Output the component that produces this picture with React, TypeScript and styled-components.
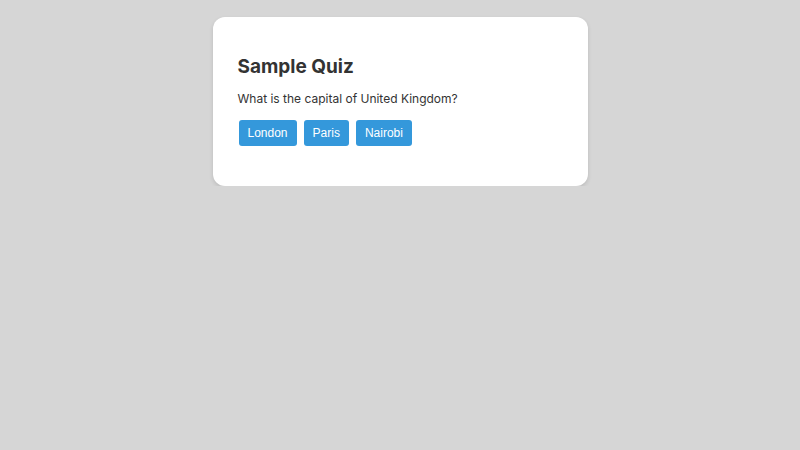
import React, { useState } from 'react';
import styled, { createGlobalStyle } from 'styled-components';

const GlobalStyle = createGlobalStyle`
	body {
		margin: 0;
		background: #d6d6d6;
		font-family: Inter, "Liberation Sans", sans-serif;
		color: #333;
	}
`;

const Page = styled.div`
	display: flex;
	justify-content: center;
	padding-top: 17px;
`;

const Card = styled.div`
	width: 375px;
	box-sizing: border-box;
	background: #fff;
	border-radius: 12px;
	box-shadow: 0 2px 4px rgba(0, 0, 0, 0.12);
	padding: 38px 25px 40px;
`;

const Title = styled.h2`
	font-size: 19px;
	font-weight: 700;
	line-height: 24px;
	margin: 0 0 11px;
	color: #333;
`;

const Question = styled.p`
	font-size: 12px;
	line-height: 18px;
	margin: 0 0 12px;
	color: #333;
`;

const Answers = styled.div`
	display: flex;
	gap: 7px;
	padding-left: 1px;
`;

const Answer = styled.button<{ picked: boolean }>`
	font-family: "Liberation Sans", Arial, sans-serif;
	font-size: 12px;
	line-height: 16px;
	padding: 5px 9px;
	border: none;
	border-radius: 3px;
	background: ${({ picked }) => (picked ? '#2a7fba' : '#3498db')};
	color: #fff;
	cursor: pointer;
`;

const options = ['London', 'Paris', 'Nairobi'];

function App(): JSX.Element {
	const [picked, setPicked] = useState<string | null>(null);

	return (
		<>
			<GlobalStyle />
			<Page>
				<Card>
					<Title>Sample Quiz</Title>
					<Question>What is the capital of United Kingdom?</Question>
					<Answers>
						{options.map((o) => (
							<Answer key={o} picked={picked === o} onClick={() => setPicked(o)}>
								{o}
							</Answer>
						))}
					</Answers>
				</Card>
			</Page>
		</>
	);
}

export default App;
